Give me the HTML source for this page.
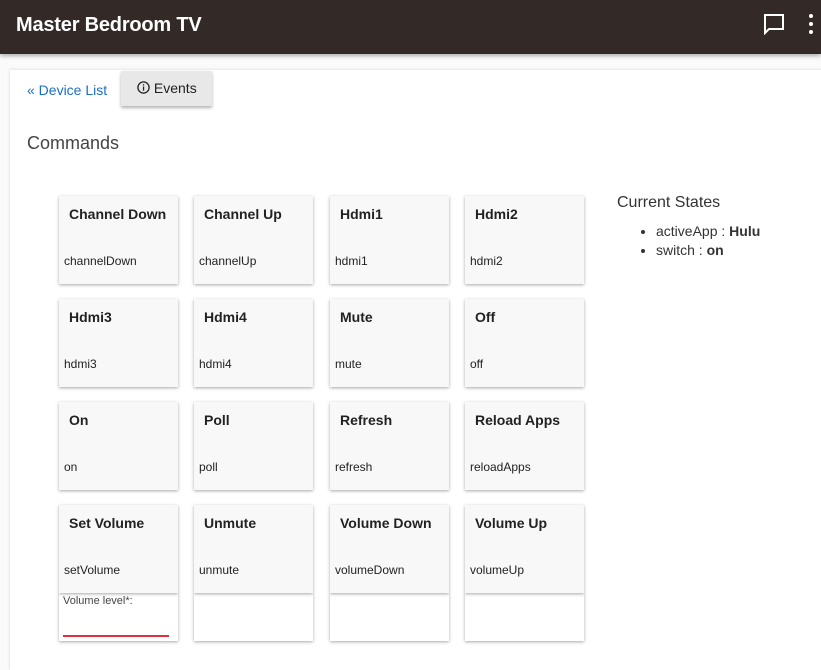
<!DOCTYPE html>
<html><head><style>
*{box-sizing:border-box;margin:0;padding:0}
body{width:821px;height:653px;overflow:hidden;background:#fafafa;font-family:"Liberation Sans",sans-serif;color:#333;position:relative}
.hdr{position:absolute;left:0;top:0;width:821px;height:54px;background:#332a27;box-shadow:0 2px 4px rgba(0,0,0,.3)}
.hdr h1{position:absolute;left:16px;top:14px;color:#fff;font-size:20px;font-weight:bold;letter-spacing:-0.2px}
.main{position:absolute;left:10px;top:70px;width:830px;height:600px;background:#fff;box-shadow:0 0 3px rgba(0,0,0,.15)}
.a{position:absolute;left:27px;top:82px;color:#1a6fc9;font-size:14px}
.ev{position:absolute;left:121px;top:71px;width:91px;height:35px;background:#e8e8e8;box-shadow:0 2px 3px rgba(0,0,0,.3);font-size:14px;padding:9px 0 0 16px;color:#222}
.cmd{position:absolute;left:27px;top:133px;font-size:18px;color:#444}
.c{position:absolute;width:119px;height:88px;background:#f8f8f8;box-shadow:0 1px 3px rgba(0,0,0,.35)}
.c b{position:absolute;left:10px;top:10px;font-size:14px;color:#222}
.c span{position:absolute;left:5px;top:58px;font-size:12px;color:#222}
.x{position:absolute;width:119px;height:48px;background:#fff;box-shadow:0 1px 3px rgba(0,0,0,.35)}
.cs{position:absolute;left:617px;top:194px;font-size:16px;color:#333}
ul{position:absolute;left:656px;top:222px;font-size:14px;line-height:19px}
</style></head><body>
<div class="hdr"><h1>Master Bedroom TV</h1>
<svg style="position:absolute;left:763px;top:13px" width="22" height="22" viewBox="0 0 22 22"><path d="M2 2h18v14H6l-4 4z" fill="none" stroke="#fff" stroke-width="2"/></svg>
<svg style="position:absolute;left:806px;top:12px" width="10" height="24"><circle cx="5" cy="4" r="2" fill="#fff"/><circle cx="5" cy="12" r="2" fill="#fff"/><circle cx="5" cy="20" r="2" fill="#fff"/></svg>
</div>
<div class="main"></div>
<div class="a">« Device List</div>
<div class="ev"><svg width="13" height="13" viewBox="0 0 13 13" style="vertical-align:-1px"><circle cx="6.5" cy="6.5" r="5.6" fill="none" stroke="#222" stroke-width="1.3"/><rect x="5.9" y="5.5" width="1.3" height="4.2" fill="#222"/><rect x="5.9" y="3.2" width="1.3" height="1.3" fill="#222"/></svg> Events</div>
<div class="cmd">Commands</div>
<div class="x" style="left:59px;top:593px"><div style="position:absolute;left:4px;top:2px;font-size:11px;color:#444">Volume level*:</div><div style="position:absolute;left:4px;top:42px;width:106px;height:2px;background:#e0323c"></div></div>
<div class="x" style="left:194px;top:593px"></div>
<div class="x" style="left:330px;top:593px"></div>
<div class="x" style="left:465px;top:593px"></div>
<div class="c" style="left:59px;top:196px"><b>Channel Down</b><span>channelDown</span></div>
<div class="c" style="left:194px;top:196px"><b>Channel Up</b><span>channelUp</span></div>
<div class="c" style="left:330px;top:196px"><b>Hdmi1</b><span>hdmi1</span></div>
<div class="c" style="left:465px;top:196px"><b>Hdmi2</b><span>hdmi2</span></div>
<div class="c" style="left:59px;top:299px"><b>Hdmi3</b><span>hdmi3</span></div>
<div class="c" style="left:194px;top:299px"><b>Hdmi4</b><span>hdmi4</span></div>
<div class="c" style="left:330px;top:299px"><b>Mute</b><span>mute</span></div>
<div class="c" style="left:465px;top:299px"><b>Off</b><span>off</span></div>
<div class="c" style="left:59px;top:402px"><b>On</b><span>on</span></div>
<div class="c" style="left:194px;top:402px"><b>Poll</b><span>poll</span></div>
<div class="c" style="left:330px;top:402px"><b>Refresh</b><span>refresh</span></div>
<div class="c" style="left:465px;top:402px"><b>Reload Apps</b><span>reloadApps</span></div>
<div class="c" style="left:59px;top:505px"><b>Set Volume</b><span>setVolume</span></div>
<div class="c" style="left:194px;top:505px"><b>Unmute</b><span>unmute</span></div>
<div class="c" style="left:330px;top:505px"><b>Volume Down</b><span>volumeDown</span></div>
<div class="c" style="left:465px;top:505px"><b>Volume Up</b><span>volumeUp</span></div>
<div class="cs">Current States</div>
<ul><li>activeApp : <b>Hulu</b></li><li>switch : <b>on</b></li></ul>
</body></html>
